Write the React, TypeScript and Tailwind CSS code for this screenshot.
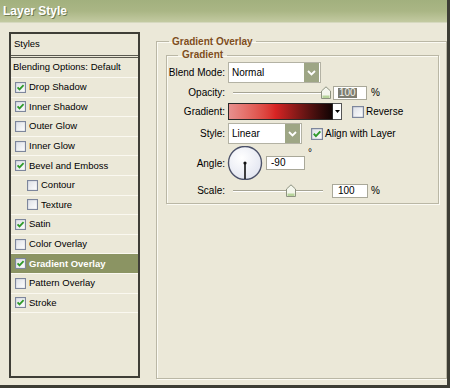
import type { ReactNode } from "react";

const STYLES = [
  { label: "Drop Shadow", checked: true },
  { label: "Inner Shadow", checked: true },
  { label: "Outer Glow" },
  { label: "Inner Glow" },
  { label: "Bevel and Emboss", checked: true },
  { label: "Contour", indent: true },
  { label: "Texture", indent: true },
  { label: "Satin", checked: true },
  { label: "Color Overlay" },
  { label: "Gradient Overlay", checked: true, active: true },
  { label: "Pattern Overlay" },
  { label: "Stroke", checked: true },
];

function CheckBox({ checked, size = 11 }: { checked?: boolean; size?: number }) {
  return (
    <svg width={size} height={size} viewBox="0 0 10 10" className="shrink-0">
      <defs>
        <linearGradient id="cb" x1="0" y1="0" x2="1" y2="1">
          <stop offset="0" stopColor="#dcdfe6" />
          <stop offset="1" stopColor="#ffffff" />
        </linearGradient>
      </defs>
      <rect x="0.5" y="0.5" width="9" height="9" fill="url(#cb)" stroke="#7d869c" />
      {checked && (
        <path d="M2.3 4.8 L4.1 6.7 L7.8 2.8" fill="none" stroke="#2f9a2a" strokeWidth="1.6" />
      )}
    </svg>
  );
}

function SelectBox({ value, width }: { value: string; width: string }) {
  return (
    <div className={`${width} flex h-[21px] items-center border border-[#b3b2a4] bg-white`}>
      <span className="flex-1 pl-[3px] text-[10px] text-black">{value}</span>
      <span className="mr-px flex h-[19px] w-[15px] items-center justify-center bg-[#9ea685]">
        <svg width="9" height="6" viewBox="0 0 9 6">
          <path d="M1 1 L4.5 4.5 L8 1" fill="none" stroke="#ffffff" strokeWidth="1.8" />
        </svg>
      </span>
    </div>
  );
}

function Slider({ thumb, track }: { thumb: string; track: string }) {
  return (
    <div className="relative h-[14px] w-[104px]">
      <div className={`absolute left-[5px] top-[6px] ${track} h-[2px] border-t border-[#a6a494] bg-white`} />
      <svg width="10" height="13" viewBox="0 0 10 13" className={`absolute top-0 ${thumb}`}>
        <path d="M0.5 12.5 V5 L5 0.8 L9.5 5 V12.5 Z" fill="#f4f6ec" stroke="#8d9280" />
        <rect x="1.5" y="9.5" width="7" height="2.5" fill="#b7d49b" />
      </svg>
    </div>
  );
}

function Field({ width, children }: { width: string; children: ReactNode }) {
  return (
    <div className={`${width} flex h-[14px] items-center border border-[#a9a899] bg-white pl-[4px] text-[10px] leading-none text-black`}>
      {children}
    </div>
  );
}

function Label({ children }: { children: ReactNode }) {
  return <span className="w-[61px] shrink-0 pr-[3px] text-right text-[10px] text-black">{children}</span>;
}

export default function App() {
  return (
    <div className="flex h-[388px] w-[450px] flex-col overflow-hidden border-r-[3px] border-b-[3px] border-[#3d3d35] bg-[#ebe8d8] font-['Liberation_Sans',Arial,sans-serif]">
      <div className="flex h-[23px] shrink-0 items-center border-b border-[#d6d9bf] bg-gradient-to-b from-[#a2b07e] via-[#aab685] to-[#c3caa1] pl-[3px]">
        <span className="text-[12px] font-bold text-white [text-shadow:1px_1px_0_#6f7a50]">Layer Style</span>
      </div>

      <div className="flex flex-1 items-start pl-[9px] pt-[9px]">
        {/* styles list */}
        <div className="flex h-[346px] w-[131px] shrink-0 flex-col border-2 border-[#3f3e37] text-[9.5px] text-black">
          <div className="flex h-[24px] shrink-0 items-center border-b-[3px] border-double border-[#5a5950] pl-[3px]">
            Styles
          </div>
          <div className="flex h-[20px] shrink-0 items-center border-b border-[#faf8f0] pl-[2px]">
            Blending Options: Default
          </div>
          {STYLES.map((s) => (
            <div
              key={s.label}
              className={`flex h-[19.6px] shrink-0 items-center gap-[3px] border-b border-[#faf8f0] ${
                s.indent ? "pl-[16px]" : "pl-[4px]"
              } ${s.active ? "bg-[#8b9463] font-bold text-white" : ""}`}
            >
              <CheckBox checked={s.checked} />
              <span>{s.label}</span>
            </div>
          ))}
        </div>

        {/* settings */}
        <fieldset className="ml-[16px] mt-[4px] h-[343px] w-[291px] border border-[#bab7a5] shadow-[inset_1px_1px_0_#fbfaf3,1px_1px_0_#fbfaf3]">
          <legend className="ml-[12px] px-[3px] text-[10px] font-bold leading-[11px] text-[#7f4e1c]">Gradient Overlay</legend>
          <fieldset className="ml-[9px] mt-[2px] w-[273px] border border-[#bab7a5] pb-[5px] shadow-[inset_1px_1px_0_#fbfaf3,1px_1px_0_#fbfaf3]">
            <legend className="ml-[11px] px-[4px] text-[10px] font-bold leading-[12px] text-[#7f4e1c]">Gradient</legend>

            <div className="mt-[1px] flex items-center">
              <Label>Blend Mode:</Label>
              <SelectBox value="Normal" width="w-[93px]" />
            </div>

            <div className="mt-[2px] flex items-center">
              <Label>Opacity:</Label>
              <Slider track="w-[92px]" thumb="left-[93px]" />
              <Field width="w-[34px] ml-px">
                <span className="bg-[#7d7d72] px-px text-[#f4f4ec]">100</span>
              </Field>
              <span className="ml-[4px] text-[10px] text-black">%</span>
            </div>

            <div className="mt-[3px] flex items-center">
              <Label>Gradient:</Label>
              <div className="h-[17px] w-[105px] border border-[#2a2a2a] bg-gradient-to-r from-[#e8908e] via-[#d82424] via-45% to-[#120404]" />
              <div className="flex h-[17px] w-[9px] items-center justify-center border border-l-0 border-[#555] bg-white">
                <svg width="5" height="3" viewBox="0 0 5 3">
                  <path d="M0 0 H5 L2.5 3 Z" fill="#000" />
                </svg>
              </div>
              <span className="ml-[10px]">
                <CheckBox size={12} />
              </span>
              <span className="ml-[2px] text-[10px] text-black">Reverse</span>
            </div>

            <div className="mt-[3px] flex items-center">
              <Label>Style:</Label>
              <SelectBox value="Linear" width="w-[74px]" />
              <span className="ml-[9px]">
                <CheckBox checked size={12} />
              </span>
              <span className="ml-[2px] text-[10px] text-black">Align with Layer</span>
            </div>

            <div className="mt-[2px] flex items-center">
              <Label>Angle:</Label>
              <svg width="38" height="34" viewBox="0 0 38 34" className="-ml-[2px]">
                <defs>
                  <radialGradient id="dial" cx="0.4" cy="0.35" r="0.7">
                    <stop offset="0" stopColor="#ffffff" />
                    <stop offset="1" stopColor="#e2e5f0" />
                  </radialGradient>
                </defs>
                <circle cx="19" cy="17" r="16.5" fill="url(#dial)" stroke="#4c526a" strokeWidth="1.4" />
                <line x1="19" y1="17" x2="19" y2="33" stroke="#111" strokeWidth="1.6" />
                <circle cx="19" cy="17" r="1.6" fill="#111" />
              </svg>
              <Field width="w-[39px] ml-[2px]">-90</Field>
              <span className="ml-[3px] self-start pt-[2px] text-[10px] leading-none text-black">°</span>
            </div>

            <div className="mt-[3px] flex items-center">
              <Label>Scale:</Label>
              <Slider track="w-[90px]" thumb="left-[58px]" />
              <Field width="w-[36px]">
                <span className="pl-[1px]">100</span>
              </Field>
              <span className="ml-[3px] text-[10px] text-black">%</span>
            </div>
          </fieldset>
        </fieldset>
      </div>
    </div>
  );
}
